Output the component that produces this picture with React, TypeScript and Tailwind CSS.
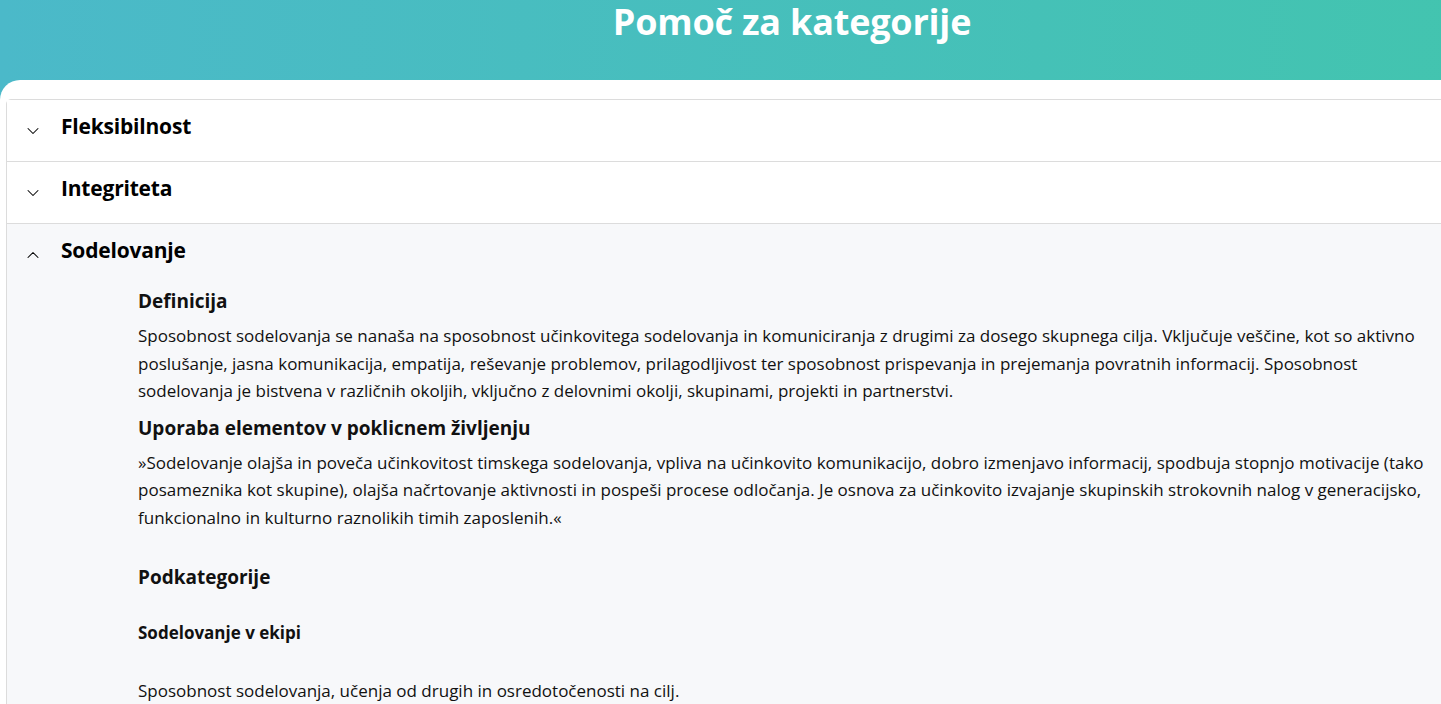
import { ChevronDown, ChevronUp } from "lucide-react";

const FONT = { fontFamily: '"Open Sans", "Noto Sans", sans-serif' };

const SECTIONS = [
  { title: "Fleksibilnost", open: false },
  { title: "Integriteta", open: false },
  { title: "Sodelovanje", open: true },
];

function RowHeader({ title, open }: { title: string; open: boolean }) {
  const Icon = open ? ChevronUp : ChevronDown;
  return (
    <div className="h-[61px] flex items-start pl-[16px]">
      <div className="w-[20px] pt-[21px] shrink-0">
        <Icon size={20} strokeWidth={1.25} className="text-black" />
      </div>
      <h3 className="ml-[18px] pt-[12px] text-[21px] leading-[28px] font-bold text-black tracking-[-0.2px]">
        {title}
      </h3>
    </div>
  );
}

const Body = () => (
  <div className="pl-[131px] pr-[131px] pt-[4px] pb-[40px] text-[#111] text-[17px]">
    <h4 className="text-[19px] font-bold leading-[24px] mb-[9px]">Definicija</h4>
    <p className="leading-[27.5px]">
      Sposobnost sodelovanja se nanaša na sposobnost učinkovitega sodelovanja in komuniciranja z
      drugimi za dosego skupnega cilja. Vključuje veščine, kot so aktivno poslušanje, jasna
      komunikacija, empatija, reševanje problemov, prilagodljivost ter sposobnost prispevanja in
      prejemanja povratnih informacij. Sposobnost sodelovanja je bistvena v različnih okoljih,
      vključno z delovnimi okolji, skupinami, projekti in partnerstvi.
    </p>
    <h4 className="text-[19px] font-bold leading-[24px] mt-[11px] mb-[9px]">
      Uporaba elementov v poklicnem življenju
    </h4>
    <p className="leading-[27.5px]">
      »Sodelovanje olajša in poveča učinkovitost timskega sodelovanja, vpliva na učinkovito
      komunikacijo, dobro izmenjavo informacij, spodbuja stopnjo motivacije (tako posameznika kot
      skupine), olajša načrtovanje aktivnosti in pospeši procese odločanja. Je osnova za učinkovito
      izvajanje skupinskih strokovnih nalog v generacijsko, funkcionalno in kulturno raznolikih timih
      zaposlenih.«
    </p>
    <h4 className="text-[19px] font-bold leading-[24px] mt-[34px]">Podkategorije</h4>
    <h5 className="text-[17px] font-bold leading-[24px] mt-[32px]">Sodelovanje v ekipi</h5>
    <p className="leading-[27.5px] mt-[32px]">
      Sposobnost sodelovanja, učenja od drugih in osredotočenosti na cilj.
    </p>
  </div>
);

export default function App() {
  return (
    <div className="w-full h-screen overflow-hidden" style={FONT}>
      <div className="w-[1584px] min-h-screen bg-gradient-to-r from-[#4bb9c9] to-[#42c5ad]">
        <header className="h-[80px] flex justify-center">
          <h1 className="text-[36px] font-bold text-white leading-[44px] tracking-[-0.2px]">
            Pomoč za kategorije
          </h1>
        </header>
        <main className="bg-white rounded-tl-[20px] pt-[19px] px-[6px] min-h-[700px]">
          <div className="border border-[#dcdcdc] rounded-t-[5px] bg-white">
            {SECTIONS.map(({ title, open }, i) => (
              <section
                key={title}
                className={
                  (i > 0 ? "border-t border-[#dcdcdc] " : "") + (open ? "bg-[#f7f8fa]" : "bg-white")
                }
              >
                <RowHeader title={title} open={open} />
                {open && <Body />}
              </section>
            ))}
          </div>
        </main>
      </div>
    </div>
  );
}
